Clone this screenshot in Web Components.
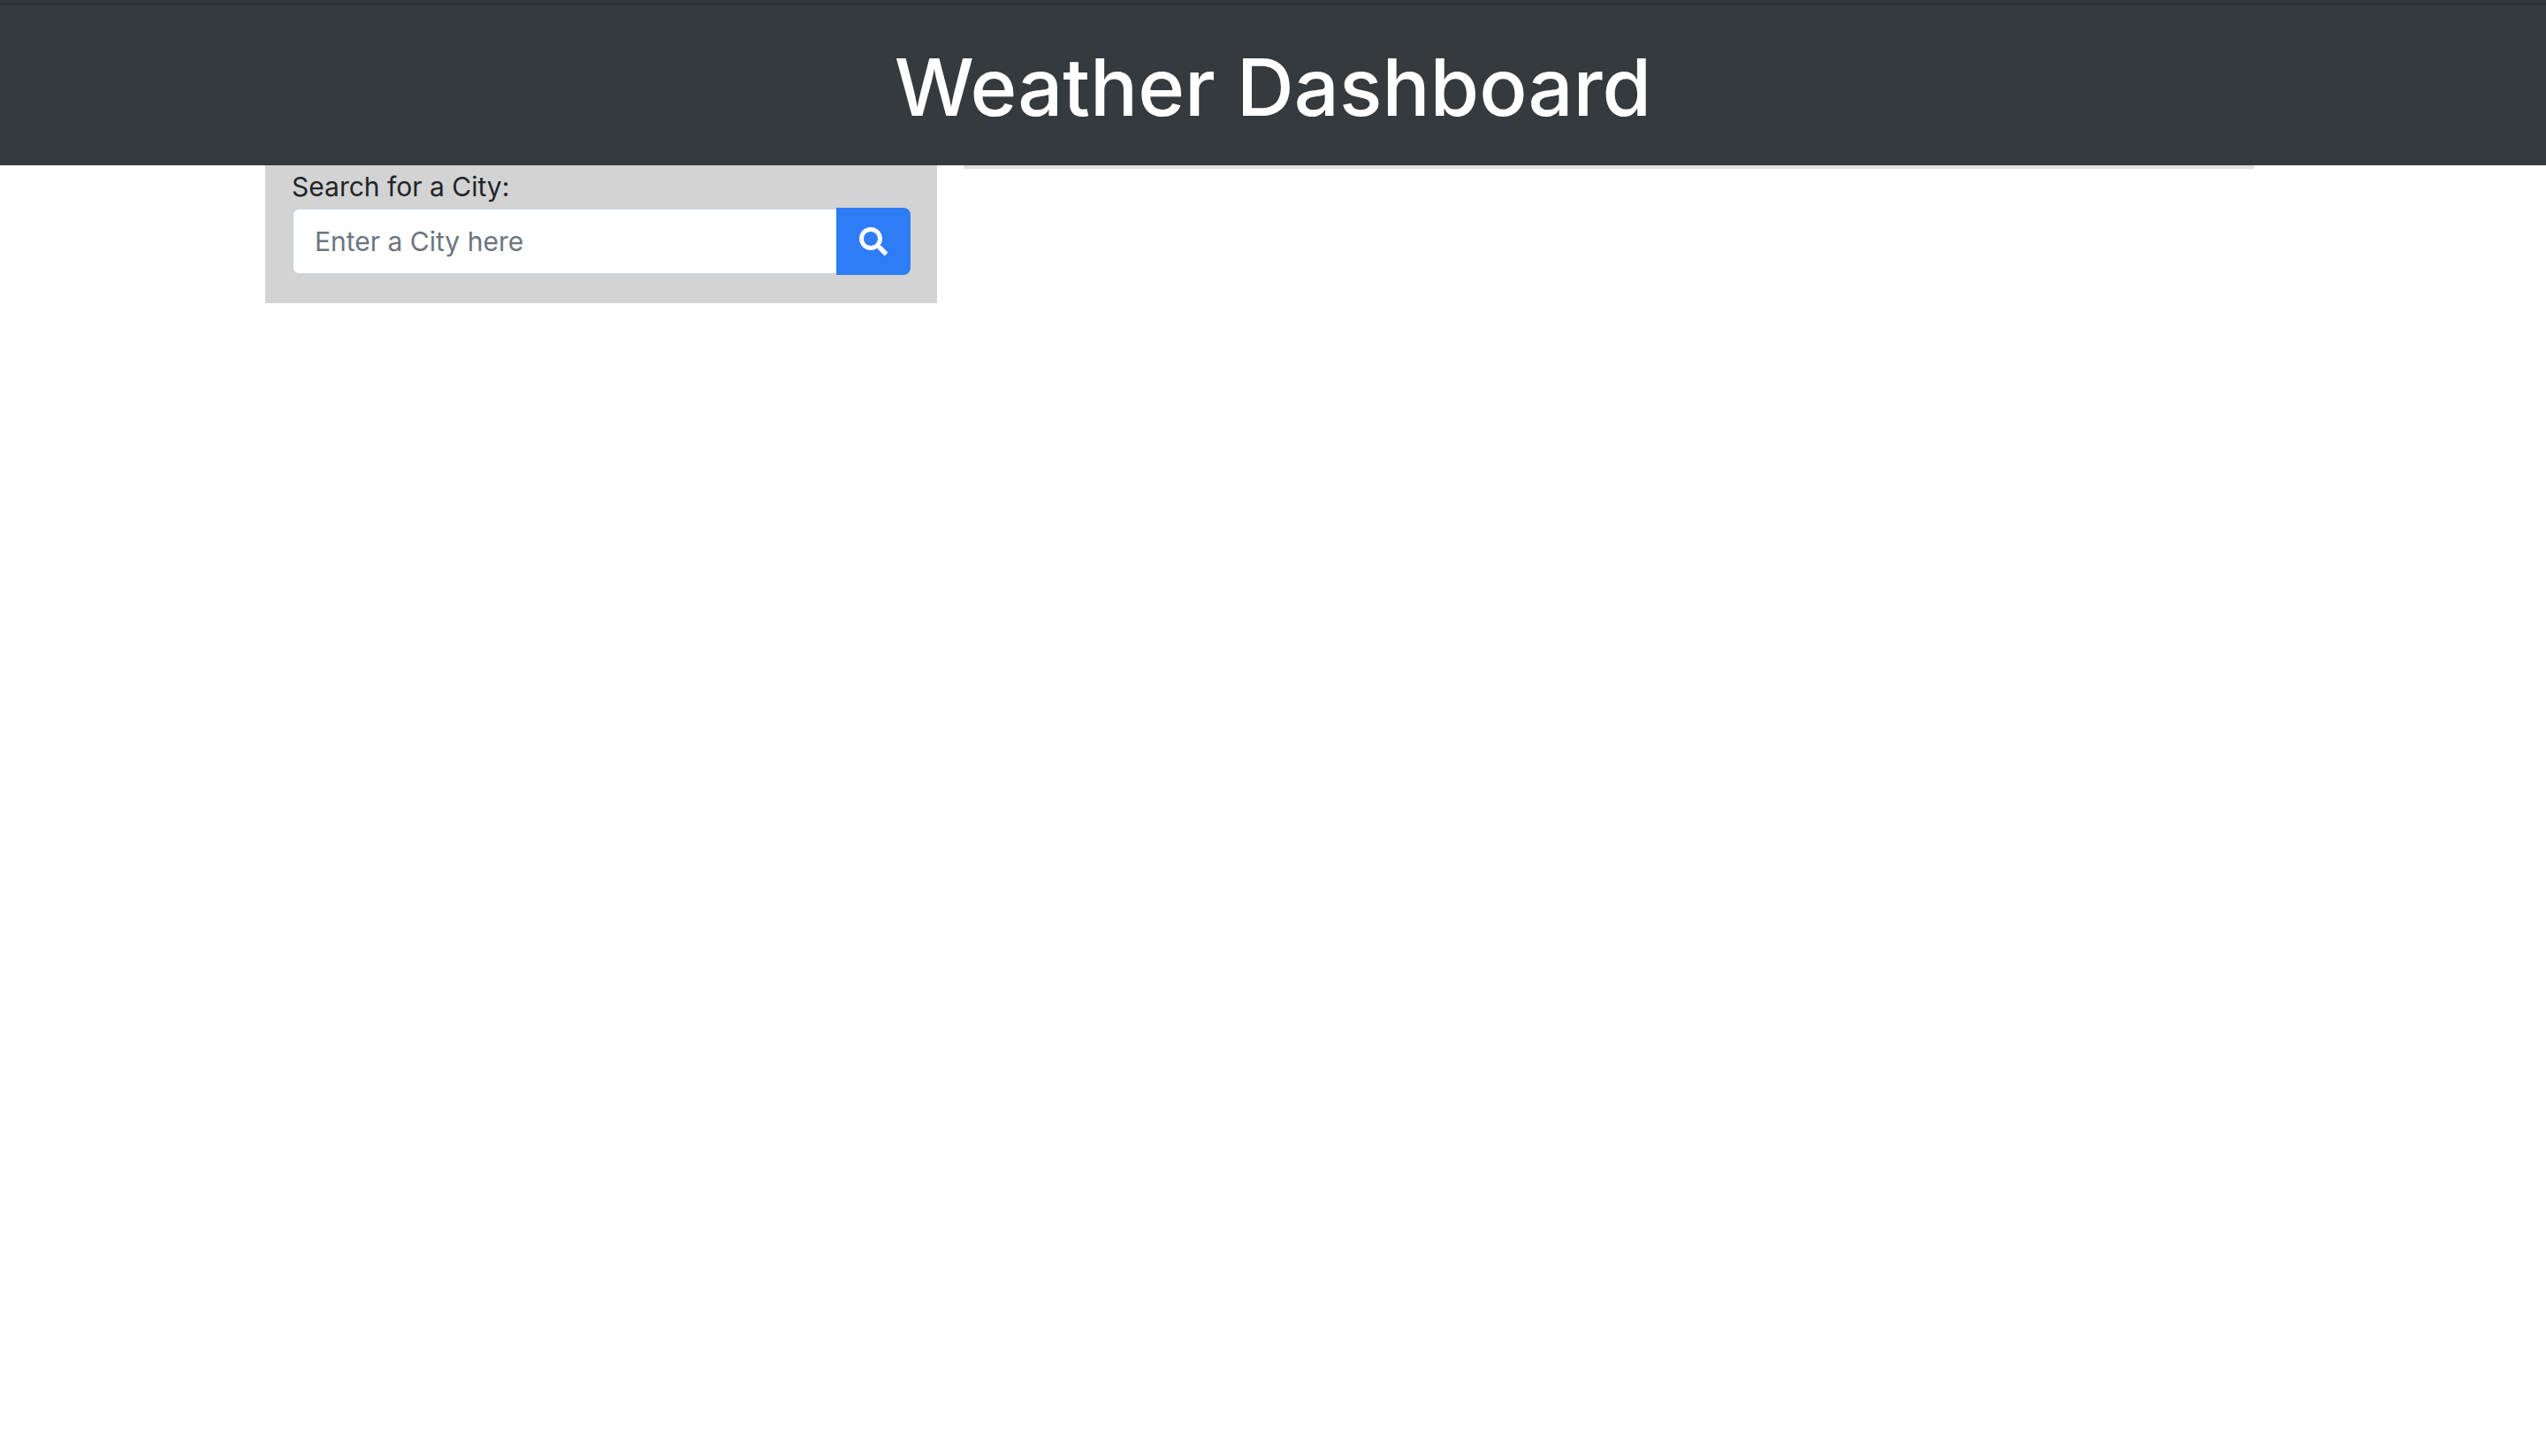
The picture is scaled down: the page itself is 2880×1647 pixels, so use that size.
<!DOCTYPE html>
<html lang="en">
<head>
<meta charset="utf-8">
<title>Weather Dashboard</title>
<style>
body { margin: 0; background: #fff; color: #212529; font: 400 30px/48px Inter, "Liberation Sans", sans-serif; }
</style>
</head>
<body>
<weather-app></weather-app>
<script>
customElements.define('page-header', class extends HTMLElement {
  constructor() {
    super();
    this.attachShadow({ mode: 'open' }).innerHTML = `
      <style>
        :host { display: block; box-sizing: border-box; color: #fff; background: #353a3e; text-align: center; border-top: 4px solid #33363a; }
        header { border-top: 1px solid #2b2b2b; padding: 34px 0 28px; }
        h1 { margin: 0; font-size: 90px; line-height: 120px; font-weight: 450; }
      </style>
      <header><h1><slot></slot></h1></header>`;
  }
});
customElements.define('city-search', class extends HTMLElement {
  constructor() {
    super();
    this.attachShadow({ mode: 'open' }).innerHTML = `
      <style>
        :host { display: block; background: #d3d3d3; padding: 0 30px 32px; }
        form { margin: 0; }
        label { display: block; }
        .group { display: flex; height: 76px; }
        input { flex: 1; min-width: 0; box-sizing: border-box; margin: 0; padding: 0 24px; font: inherit; color: #495057; background: #fff; border: 2px solid #ced4da; border-right: 0; border-radius: 8px 0 0 8px; outline: 0; }
        input::placeholder { color: #6c757d; opacity: 1; }
        button { display: flex; align-items: center; justify-content: center; width: 84px; padding: 0; border: 0; border-radius: 0 8px 8px 0; background: #2f7df6; color: #fff; }
        svg { width: 32px; height: 32px; display: block; }
      </style>
      <form>
        <label for="city">Search for a City:</label>
        <div class="group">
          <input id="city" type="text" placeholder="Enter a City here">
          <button type="button" aria-label="Search"><svg viewBox="0 0 512 512" fill="currentColor" aria-hidden="true"><path d="M505 442.700L405.300 343c-4.500-4.500-10.600-7-17-7H372c27.600-35.300 44-79.700 44-128C416 93.100 322.900 0 208 0S0 93.100 0 208s93.100 208 208 208c48.300 0 92.700-16.400 128-44v16.300c0 6.400 2.500 12.500 7 17l99.700 99.700c9.400 9.400 24.600 9.400 33.900 0l28.300-28.300c9.400-9.400 9.400-24.600.1-34zM208 336c-70.700 0-128-57.200-128-128 0-70.700 57.200-128 128-128 70.700 0 128 57.200 128 128 0 70.700-57.200 128-128 128z"/></svg></button>
        </div>
      </form>`;
  }
});
customElements.define('weather-results', class extends HTMLElement {
  constructor() {
    super();
    this.attachShadow({ mode: 'open' }).innerHTML = `
      <style>
        :host { display: block; padding: 0 30px; }
        section { border: 2px solid #dfdfdf; border-radius: 2px; }
      </style>
      <section aria-label="Current weather"><slot></slot></section>`;
  }
});
customElements.define('weather-app', class extends HTMLElement {
  constructor() {
    super();
    this.attachShadow({ mode: 'open' }).innerHTML = `
      <style>
        :host { display: block; }
        main { display: grid; grid-template-columns: 1fr 2fr; align-items: start; max-width: 2280px; margin: 0 auto; }
      </style>
      <page-header>Weather Dashboard</page-header>
      <main><city-search></city-search><weather-results></weather-results></main>`;
  }
});
</script>
</body>
</html>
